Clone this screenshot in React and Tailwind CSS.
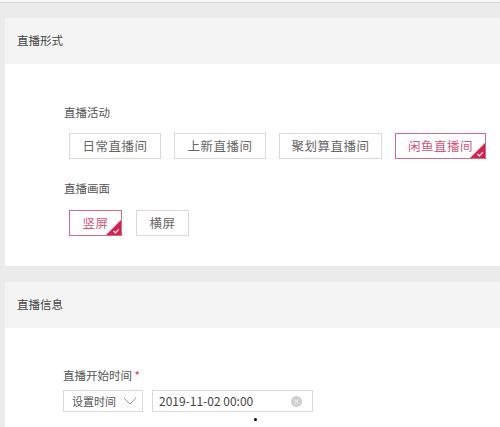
const font = { fontFamily: '"Noto Sans CJK SC", "Noto Sans", sans-serif' };

const Corner = () => (
  <svg className="absolute right-0 bottom-0" width="15" height="15" viewBox="0 0 15 15">
    <path d="M15 0 L15 15 L0 15 Z" fill="#d6204d" />
    <path d="M7.5 11 L9.5 12.8 L12.8 9.2" fill="none" stroke="#fff" strokeWidth="1.2" />
  </svg>
);

const Option = ({ label, width, selected }) => (
  <div
    className={`relative h-[26px] flex items-center justify-center border text-[12.5px] tracking-[0.5px] ${
      selected ? 'border-[#cf6b86] text-[#d0587a]' : 'border-[#d9d9d9] text-[#666]'
    } ${width}`}
  >
    {label}
    {selected && <Corner />}
  </div>
);

const Section = ({ title, children, bodyClass }) => (
  <div className="bg-white">
    <div className="h-[46px] bg-[#f4f4f4] flex items-center pl-[12px] text-[11.5px] text-[#444]">{title}</div>
    <div className={bodyClass}>{children}</div>
  </div>
);

export default function App() {
  return (
    <div className="w-[500px] h-[427px] bg-[#ebebeb] overflow-hidden" style={font}>
      <div className="h-[3px] bg-[#f6f6f6] border-b border-[#d5d5d5]" />
      <div className="pl-[5px] pt-[15px] flex flex-col gap-[16px]">
        <Section title="直播形式" bodyClass="h-[202px] pl-[59px] pt-[39px]">
          <div className="text-[11.5px] text-[#555] leading-[18px]">直播活动</div>
          <div className="flex gap-[13px] mt-[12px] pl-[5px]">
            <Option label="日常直播间" width="w-[92px]" />
            <Option label="上新直播间" width="w-[92px]" />
            <Option label="聚划算直播间" width="w-[103px]" />
            <Option label="闲鱼直播间" width="w-[91px]" selected />
          </div>
          <div className="text-[11.5px] text-[#555] leading-[18px] mt-[20px]">直播画面</div>
          <div className="flex gap-[14px] mt-[13px] pl-[5px]">
            <Option label="竖屏" width="w-[53px]" selected />
            <Option label="横屏" width="w-[53px]" />
          </div>
        </Section>
        <Section title="直播信息" bodyClass="h-[120px] pl-[58px] pt-[38px] relative">
          <div className="text-[11.5px] text-[#555] leading-[18px]">
            直播开始时间 <span className="text-[#e0305a]">*</span>
          </div>
          <div className="flex gap-[9px] mt-[6px]">
            <div className="w-[80px] h-[22px] border border-[#d9d9d9] flex items-center pl-[8px] gap-[7px] text-[11px] text-[#555] whitespace-nowrap">
              设置时间
              <svg width="14" height="8" viewBox="0 0 14 8" className="shrink-0">
                <path d="M1 1 L7 7 L13 1" fill="none" stroke="#999" strokeWidth="1" />
              </svg>
            </div>
            <div className="w-[161px] h-[22px] border border-[#d9d9d9] flex items-center pl-[6px] pr-[10px] justify-between text-[12px] text-[#444] whitespace-nowrap">
              2019-11-02 00:00
              <span className="w-[11px] h-[11px] rounded-full bg-[#cfcfcf] flex items-center justify-center">
                <svg width="5" height="5" viewBox="0 0 5 5">
                  <path d="M0.5 0.5 L4.5 4.5 M4.5 0.5 L0.5 4.5" stroke="#fff" strokeWidth="1" />
                </svg>
              </span>
            </div>
          </div>
          <div className="absolute left-[249px] top-[90px] w-[3px] h-[3px] rounded-full bg-black" />
        </Section>
      </div>
    </div>
  );
}
